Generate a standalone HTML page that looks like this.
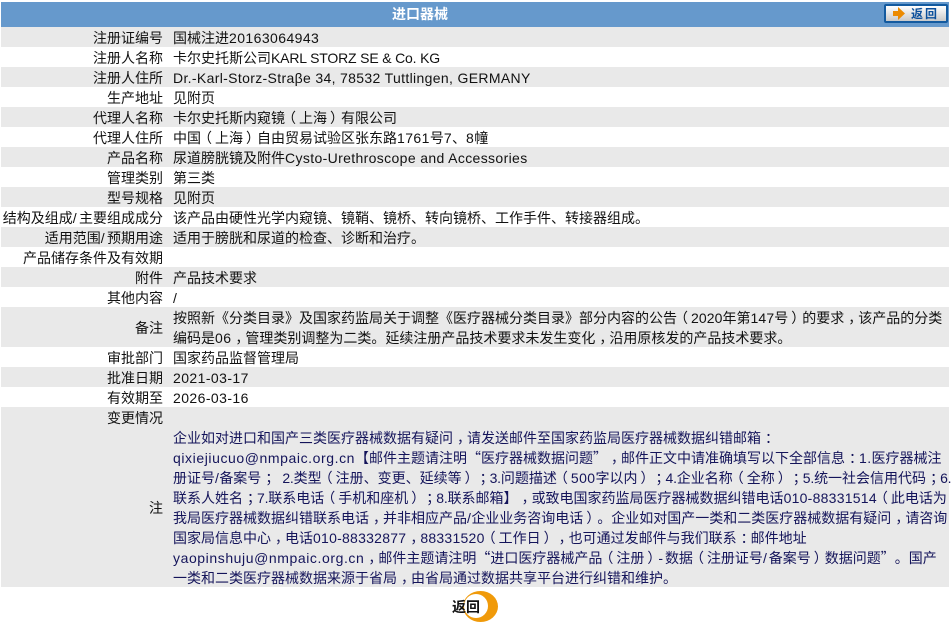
<!DOCTYPE html>
<html lang="zh-CN"><head><meta charset="utf-8"><title>进口器械</title>
<style>
html,body{margin:0;padding:0;background:#fff;width:952px;height:625px;overflow:hidden}
body{font:14px/20px "Noto Sans CJK SC","Microsoft YaHei",sans-serif;color:#111;position:relative;text-spacing-trim:space-all}
.r{position:absolute;left:1px;width:948px;height:20px}
.g{background:#e9e9e9}
.k{position:absolute;right:786px;top:0;white-space:nowrap;margin-top:1px}
.v{position:absolute;left:172px;top:0;white-space:nowrap;margin-top:1px}
.l{font-family:"Liberation Sans",sans-serif;letter-spacing:.42px}
.e{font-family:"Liberation Sans",sans-serif;letter-spacing:.58px}
.o{font-family:"Liberation Sans",sans-serif;letter-spacing:-.2px}
.p{font-family:"Liberation Sans",sans-serif;letter-spacing:.25px}
.y{font-family:"Liberation Sans",sans-serif;letter-spacing:.1px}
.w{font-family:"Liberation Sans",sans-serif;letter-spacing:1.9px}
.n{color:#14145a}
i,s,u{font-style:normal;text-decoration:none;position:relative}
i{left:4px}
s{left:-3px}
u{left:3px}
#h{position:absolute;left:1px;top:2px;width:948px;height:25px;background:#6699cc;color:#fff;font-weight:bold;line-height:25px;text-align:center;padding-right:110px;box-sizing:border-box}
#b{position:absolute;left:884px;top:4px;width:64px;height:19px;box-sizing:border-box;border:2px solid #135a9f;border-radius:2px;background:linear-gradient(#fff,#c9c9c9)}
#b span{position:absolute;left:25px;top:-1px;font-size:12px;line-height:17px;font-weight:bold;color:#0b4f9b;letter-spacing:2px;white-space:nowrap}
#b svg{position:absolute;left:7px;top:1px}
#c{position:absolute;left:463px;top:591px;width:35px;height:31px}
#t{position:absolute;left:452px;top:597px;font-weight:bold;font-size:14px;line-height:20px;color:#111;white-space:nowrap}
</style></head><body>
<div id="h">进口器械</div>
<div id="b"><svg width="12" height="13" viewBox="0 0 12 13"><path d="M0 4H5V0L12 6.5 5 13V9H0Z" fill="#ec8a00"/></svg><span>返回</span></div>

<div class="r g" style="top:27px"><div class="k">注册证编号</div><div class="v">国械注进<span class="l">20163064943</span></div></div>
<div class="r" style="top:47px"><div class="k">注册人名称</div><div class="v">卡尔史托斯公司<span class="l" style="letter-spacing:-.17px">KARL STORZ SE &amp; Co. KG</span></div></div>
<div class="r g" style="top:67px"><div class="k">注册人住所</div><div class="v"><span class="l" style="letter-spacing:.34px">Dr.-Karl-Storz-Straβe 34, 78532 Tuttlingen, GERMANY</span></div></div>
<div class="r" style="top:87px"><div class="k">生产地址</div><div class="v">见附页</div></div>
<div class="r g" style="top:107px"><div class="k">代理人名称</div><div class="v">卡尔史托斯内窥镜<s>（</s>上海<u>）</u>有限公司</div></div>
<div class="r" style="top:127px"><div class="k">代理人住所</div><div class="v">中国<s>（</s>上海<u>）</u>自由贸易试验区张东路<span class="l">1761</span>号<span class="l">7</span>、<span class="l">8</span>幢</div></div>
<div class="r g" style="top:147px"><div class="k">产品名称</div><div class="v">尿道膀胱镜及附件<span class="l" style="letter-spacing:.36px">Cysto-Urethroscope and Accessories</span></div></div>
<div class="r" style="top:167px"><div class="k">管理类别</div><div class="v">第三类</div></div>
<div class="r g" style="top:187px"><div class="k">型号规格</div><div class="v">见附页</div></div>
<div class="r" style="top:207px"><div class="k">结构及组成<span class="l" style="letter-spacing:2.4px">/</span>主要组成成分</div><div class="v">该产品由硬性光学内窥镜、镜鞘、镜桥、转向镜桥、工作手件、转接器组成。</div></div>
<div class="r g" style="top:227px"><div class="k">适用范围<span class="l" style="letter-spacing:2.4px">/</span>预期用途</div><div class="v">适用于膀胱和尿道的检查、诊断和治疗。</div></div>
<div class="r" style="top:247px"><div class="k">产品储存条件及有效期</div></div>
<div class="r g" style="top:267px"><div class="k">附件</div><div class="v">产品技术要求</div></div>
<div class="r" style="top:287px"><div class="k">其他内容</div><div class="v"><span class="l">/</span></div></div>
<div class="r g" style="top:307px;height:40px"><div class="k" style="top:10px">备注</div>
<div class="v">按照新《分类目录》及国家药监局关于调整《医疗器械分类目录》部分内容的公告<s>（</s><span class="y">2020</span>年第<span class="y">147</span>号<u>）</u>的要求<i>，</i>该产品的分类</div>
<div class="v" style="top:20px">编码是<span class="l">06</span><i>，</i>管理类别调整为二类。延续注册产品技术要求未发生变化<i>，</i>沿用原核发的产品技术要求。</div></div>
<div class="r" style="top:347px"><div class="k">审批部门</div><div class="v">国家药品监督管理局</div></div>
<div class="r g" style="top:367px"><div class="k">批准日期</div><div class="v"><span class="l">2021-03-17</span></div></div>
<div class="r" style="top:387px"><div class="k">有效期至</div><div class="v"><span class="l">2026-03-16</span></div></div>
<div class="r g" style="top:407px"><div class="k">变更情况</div></div>
<div class="r g n" style="top:427px;height:160px"><div class="k" style="top:70px;color:#111">注</div>
<div class="v" style="top:0">企业如对进口和国产三类医疗器械数据有疑问<i>，</i>请发送邮件至国家药监局医疗器械数据纠错邮箱<i>：</i></div>
<div class="v" style="top:20px"><span class="e">qixiejiucuo@nmpaic.org.cn</span>【邮件主题请注明“医疗器械数据问题”<i>，</i>邮件正文中请准确填写以下全部信息<i>：</i><span class="l">1.</span>医疗器械注</div>
<div class="v" style="top:40px">册证号<span class="l">/</span>备案号<i>；</i><span style="display:inline-block;width:7px"></span><span class="o">2.</span>类型<s>（</s>注册、变更、延续等<u>）</u><i>；</i><span class="o">3.</span>问题描述<s>（</s><span class="l">500</span>字以内<u>）</u><i>；</i><span class="o">4.</span>企业名称<s>（</s>全称<u>）</u><i>；</i><span class="o">5.</span>统一社会信用代码<i>；</i><span class="o">6.</span></div>
<div class="v" style="top:60px">联系人姓名<i>；</i><span class="o">7.</span>联系电话<s>（</s>手机和座机<u>）</u><i>；</i><span class="o">8.</span>联系邮箱】<i>，</i>或致电国家药监局医疗器械数据纠错电话<span class="p">010-88331514</span><s>（</s>此电话为</div>
<div class="v" style="top:80px">我局医疗器械数据纠错联系电话<i>，</i>并非相应产品<span class="l">/</span>企业业务咨询电话<u>）</u>。企业如对国产一类和二类医疗器械数据有疑问<i>，</i>请咨询</div>
<div class="v" style="top:100px">国家局信息中心<i>，</i>电话<span class="p">010-88332877</span><i>，</i><span class="p">88331520</span><s>（</s>工作日<u>）</u><i>，</i>也可通过发邮件与我们联系<i>：</i>邮件地址</div>
<div class="v" style="top:120px"><span class="e">yaopinshuju@nmpaic.org.cn</span><i>，</i>邮件主题请注明“进口医疗器械产品<s>（</s>注册<u>）</u><span class="w">-</span>数据<s>（</s>注册证号<span class="w">/</span>备案号<u>）</u>数据问题”。国产</div>
<div class="v" style="top:140px">一类和二类医疗器械数据来源于省局<i>，</i>由省局通过数据共享平台进行纠错和维护。</div></div>

<svg id="c" viewBox="0 0 35 31"><ellipse cx="17.5" cy="15.5" rx="17.5" ry="15.5" fill="#f09a0a"/><circle cx="13" cy="15" r="12" fill="#fff"/></svg>
<div id="t">返回</div>
</body></html>
